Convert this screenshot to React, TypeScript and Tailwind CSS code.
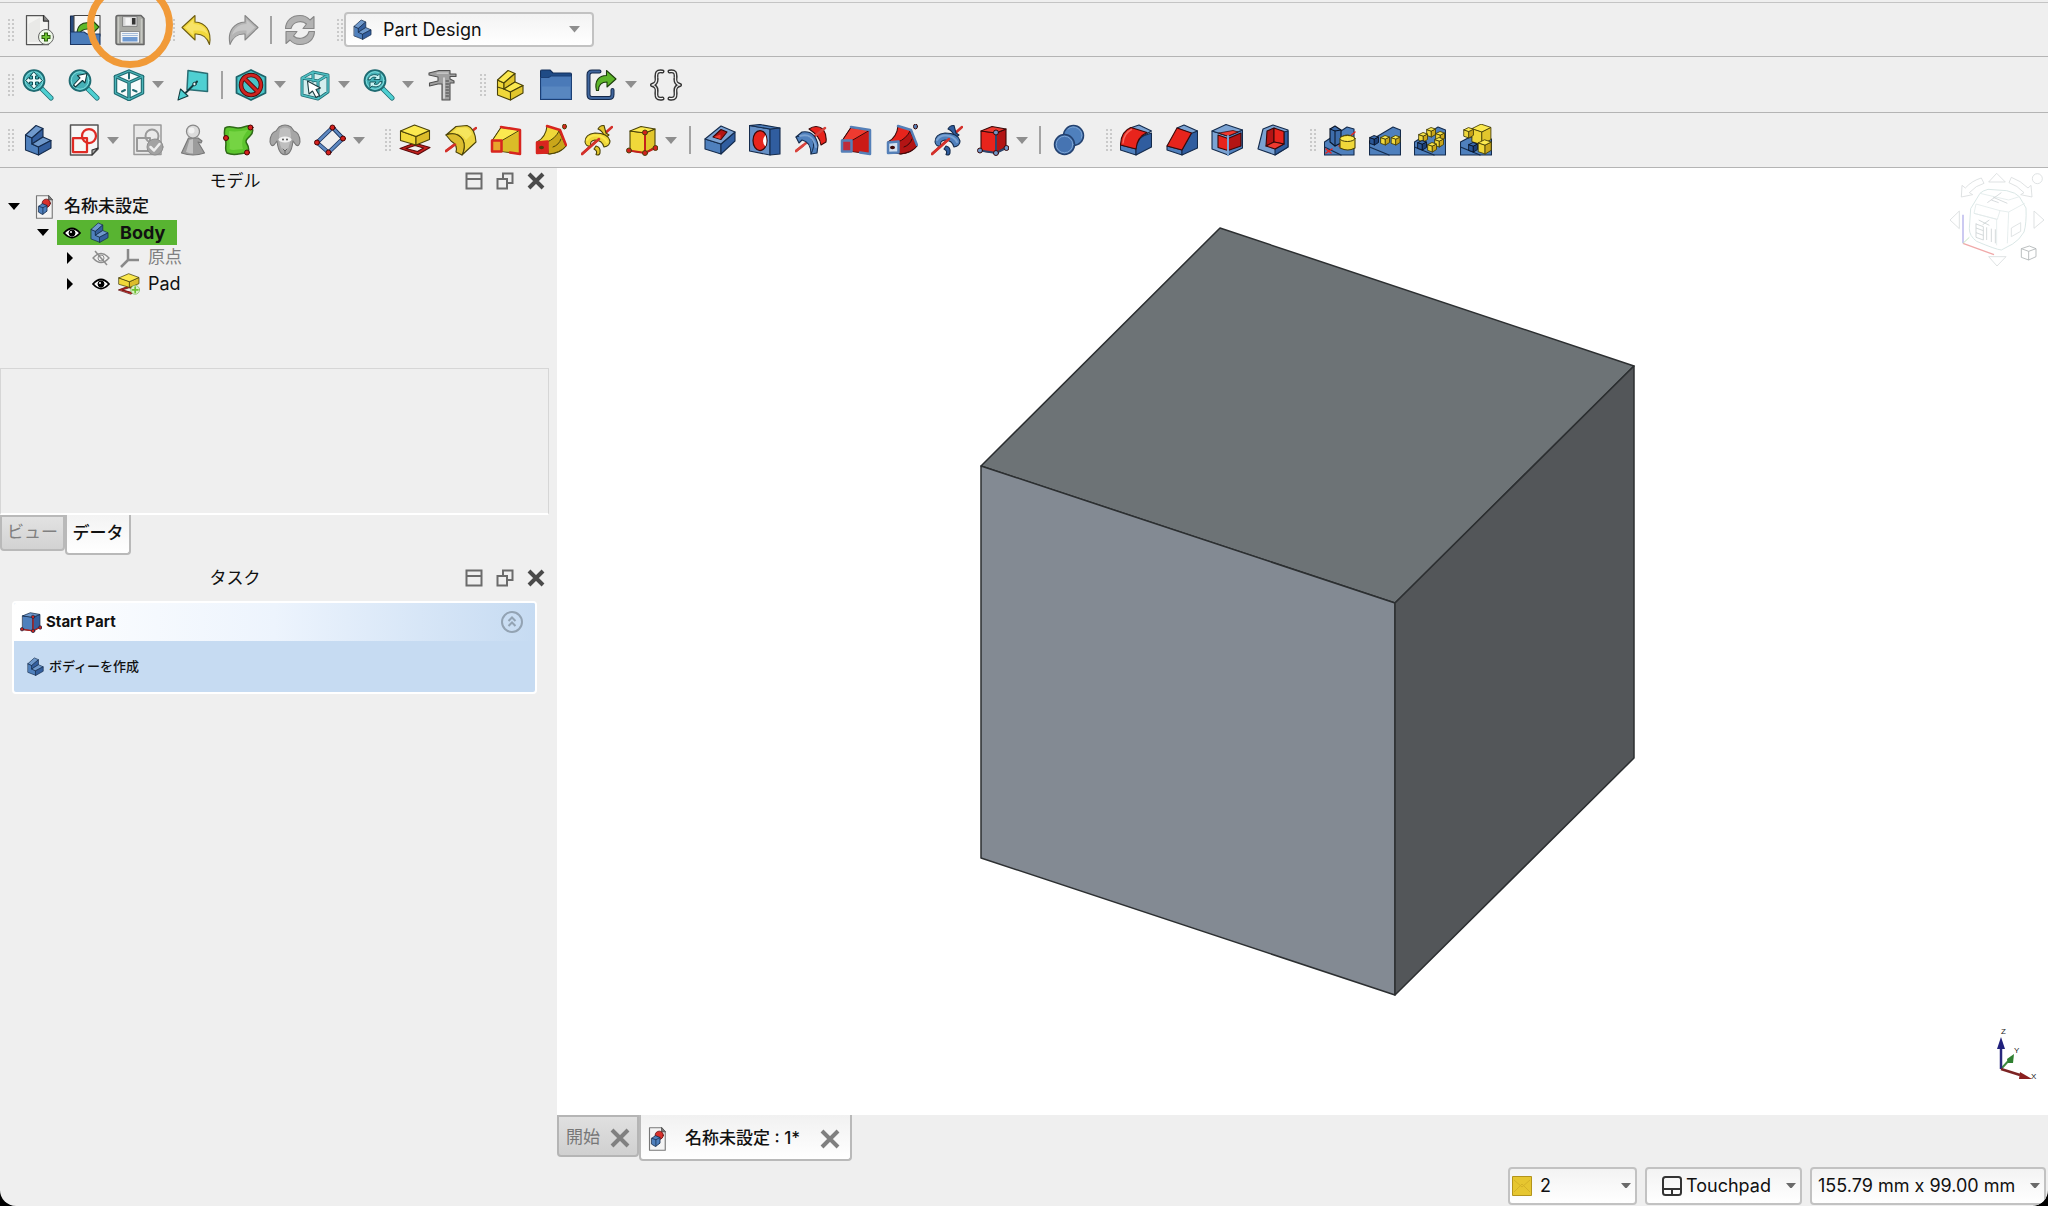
import React from "react";

type Pal = { l: string; m: string; d: string; s: string };
const Y: Pal = { l: "#fbe94f", m: "#f0d83a", d: "#c9a61a", s: "#4a4208" };
const R: Pal = { l: "#ef3a30", m: "#e8241c", d: "#b31414", s: "#3a0808" };
const B: Pal = { l: "#7ba3d3", m: "#4f80bd", d: "#305d9f", s: "#142b4c" };

function Svg({ children, className = "size-8" }: { children: React.ReactNode; className?: string }) {
  return (
    <svg viewBox="0 0 64 64" className={`${className} shrink-0`} aria-hidden="true" strokeLinejoin="round" strokeLinecap="round" fill="none">
      {children}
    </svg>
  );
}

/* A filled face with an outline */
function F({ d, f, s = "#111", w = 2.2 }: { d: string; f: string; s?: string; w?: number }) {
  return <path d={d} fill={f} stroke={s} strokeWidth={w} />;
}

/* A stroked line with a darker casing */
function L({ d, c, s, w = 5 }: { d: string; c: string; s: string; w?: number }) {
  return (
    <>
      <path d={d} stroke={s} strokeWidth={w + 3} />
      <path d={d} stroke={c} strokeWidth={w} />
    </>
  );
}

/* ---------- file icons ---------- */
const NewDoc = () => (
  <Svg>
    <F d="M7 3H41L51 14V61H7Z" f="#f4f4f2" s="#555" w={2.5} />
    <path d="M41 3V14H51" fill="#888" stroke="#333" strokeWidth={2.5} />
    <path d="M11 56V20L34 7V56Z" fill="#dededb" opacity="0.5" />
    <circle cx="46" cy="46" r="15" fill="#eef7e8" stroke="#666" strokeWidth="2" />
    <path d="M46 37V55M37 46H55" stroke="#2c5c10" strokeWidth="8" strokeLinecap="butt" />
    <path d="M46 39V53M39 46H53" stroke="#6cc02f" strokeWidth="4" strokeLinecap="butt" />
  </Svg>
);
const OpenDoc = () => (
  <Svg>
    <F d="M3 4H20V40H3Z" f="#2a4d80" s="#14284a" />
    <F d="M10 3H62V44H10Z" f="#f6f6f6" s="#444" />
    <F d="M16 40C16 24 26 15 42 18V8L60 26L44 42V31C32 28 24 32 18 42Z" f="#5fb829" s="#1d3d0c" />
    <F d="M3 36H30L36 40H62V61H3Z" f="#4a7cba" s="#1b3765" />
  </Svg>
);
const Save = () => (
  <Svg>
    <F d="M8 3H54L60 9V61H8Q4 61 4 57V7Q4 3 8 3Z" f="#a9aaa5" s="#666" w={3} />
    <path d="M9 7V57M55 11V57" stroke="#c8c9c4" strokeWidth="3" />
    <path d="M18 5H46V25H18Z" fill="#d9d9d9" stroke="#777" strokeWidth="1.5" />
    <path d="M36 8H43V21H36Z" fill="#333" />
    <path d="M23 8H33V22H23Z" fill="#f4f4f4" />
    <F d="M13 35H51V58H13Z" f="#f2f4f6" s="#777" w={1.5} />
    <path d="M17 39H47M17 43H47" stroke="#8aa8cf" strokeWidth="1.5" />
    <path d="M17 46H47V55H17Z" fill="#6f9ad2" />
  </Svg>
);
const Undo = () => (
  <Svg>
    <F d="M2 27L28 3V16C48 17 62 32 57 61C52 46 44 39 28 40V52Z" f="#f2d83c" s="#6d5c10" />
    <path d="M8 27L25 11V20C40 20 50 27 54 41C47 34 40 32 25 33V43Z" fill="#fbeb83" opacity="0.6" />
  </Svg>
);
const Redo = () => (
  <Svg>
    <F d="M62 27L36 3V16C16 17 0 32 6 61C12 46 20 39 36 40V52Z" f="#b4b4b4" s="#858585" />
    <path d="M56 27L39 11V20C24 20 14 28 10 42C18 34 26 32 39 33V43Z" fill="#cfcfcf" opacity="0.7" />
  </Svg>
);
const Refresh = () => (
  <Svg>
    <F d="M3 29C4 12 16 3 32 3C40 3 47 6 52 12L60 5V29H38L45 20C36 12 18 14 14 29Z" f="#b2b2b2" s="#868686" />
    <F d="M61 35C60 52 48 61 32 61C24 61 17 58 12 52L4 59V35H26L19 44C28 52 46 50 50 35Z" f="#b2b2b2" s="#868686" />
  </Svg>
);

/* ---------- view icons ---------- */
const TEAL = "#1f6b72";
const CYAN = "#4fd0d2";
function Lens({ children }: { children: React.ReactNode }) {
  return (
    <Svg>
      <L d="M40 40L58 58" c={CYAN} s={TEAL} w={7} />
      <circle cx="24" cy="23" r="21" fill="#45b0b6" stroke={TEAL} strokeWidth="3.5" />
      <circle cx="24" cy="23" r="17.5" stroke="#7fdede" strokeWidth="2" />
      {children}
    </Svg>
  );
}
const FitAll = () => (
  <Lens>
    <path d="M24 6L31 14H27V20H33V16L41 23L33 30V26H27V32H31L24 40L17 32H21V26H15V30L7 23L15 16V20H21V14H17Z" fill="#eafafa" stroke="#0f4e54" strokeWidth="2" />
  </Lens>
);
const FitSel = () => (
  <Lens>
    <path d="M38 9L34 28L29 23L15 36L11 32L24 18L19 13Z" fill="#fff" stroke="#103a3e" strokeWidth="2.2" />
  </Lens>
);
const SyncView = () => (
  <Lens>
    <path d="M10 21C12 12 22 9 30 13L34 9V21H22L26 17C20 15 17 17 15 21Z" fill="#c9f4f4" stroke="#0f4e54" strokeWidth="1.8" />
    <path d="M38 26C36 35 26 38 18 34L14 38V26H26L22 30C28 32 31 30 33 26Z" fill="#c9f4f4" stroke="#0f4e54" strokeWidth="1.8" />
  </Lens>
);
const IsoView = () => (
  <Svg>
    <F d="M32 4L59 15V48L32 61L5 48V15Z" f="#f8fbfb" s={TEAL} w={7} />
    <path d="M5 15L32 27L59 15M32 27V61" stroke={TEAL} strokeWidth="7" />
    <path d="M32 4L59 15V48L32 61L5 48V15ZM5 15L32 27L59 15M32 27V61" stroke="#4ab5b8" strokeWidth="2.5" />
    <path d="M32 9V19M18 45L24 42M40 42L47 45" stroke={TEAL} strokeWidth="4" />
  </Svg>
);
const AlignView = () => (
  <Svg>
    <F d="M22 3L61 9V45L20 41Z" f={CYAN} s="#2a6d73" w={3} />
    <path d="M40 25L18 47" stroke="#123c40" strokeWidth="4" />
    <circle cx="35" cy="30" r="3.5" fill="#e8f8f8" stroke="#123c40" strokeWidth="2" />
    <F d="M2 62L7 40L22 54Z" f={CYAN} s="#123c40" />
  </Svg>
);
const DrawStyle = () => (
  <Svg>
    <F d="M32 2L61 16V48L32 62L3 48V16Z" f="#49c4c8" s="#1d646a" w={3.5} />
    <circle cx="32" cy="32" r="20" stroke="#4c0a0a" strokeWidth="9" />
    <path d="M18 18L46 46" stroke="#4c0a0a" strokeWidth="9" />
    <circle cx="32" cy="32" r="20" stroke="#cf2320" strokeWidth="5.5" />
    <path d="M18 18L46 46" stroke="#cf2320" strokeWidth="5.5" />
  </Svg>
);
const BoxSel = () => (
  <Svg>
    <path d="M6 18L28 6L58 12V46L38 60L6 52Z" fill="#c9eeee" opacity="0.7" />
    <L d="M6 18L28 6L58 12V46L38 60L6 52ZM6 18L38 24L58 12M38 24V60M28 6V24" c="#4fbfc2" s={TEAL} w={3} />
    <F d="M17 24L20 50L27 44L34 57L41 53L34 41L43 38Z" f="#fff" s="#1b3c40" />
  </Svg>
);
const Caliper = () => (
  <Svg>
    <F d="M4 8L24 3H46V10H58V15H46V20L54 24V28H46V62H30V30H22L5 34V28L22 24V16L4 12Z" f="#a0a0a0" s="#505050" />
    <path d="M34 18V58" stroke="#e2e2e2" strokeWidth="3" />
    <path d="M38 24H43M38 30H43M38 36H43M38 42H43M38 48H43M38 54H43" stroke="#444" strokeWidth="2" />
    <path d="M20 8H42" stroke="#d0d0d0" strokeWidth="2.5" />
  </Svg>
);

/* ---------- structure icons ---------- */
function Step({ p, className, split = false }: { p: Pal; className?: string; split?: boolean }) {
  return (
    <Svg className={className}>
      <F d="M7 22L20 28V40L33 46V62L7 52Z" f={p.m} s={p.s} />
      <F d="M7 22L28 3L42 9L20 28Z" f={p.l} s={p.s} />
      <F d="M20 28L42 9V26L20 40Z" f={p.d} s={p.s} />
      <F d="M20 40L42 26L58 33L33 46Z" f={p.l} s={p.s} />
      <F d="M33 46L58 33V48L33 62Z" f={p.d} s={p.s} />
      {split && <path d="M7 36L20 40" stroke={p.s} strokeWidth="2.5" />}
    </Svg>
  );
}
const Y2: Pal = { ...Y, d: "#e2c62c" };
const B2: Pal = { ...B, l: "#6f99cc", d: "#345f9e" };
const Folder = () => (
  <Svg>
    <F d="M1 5Q1 2 4 2H20L26 8H60Q63 8 63 11V30H1Z" f="#1f4b86" s="#14305c" />
    <F d="M1 17H17L22 14H63V61H1Z" f="#4a7ab8" s="#1b3f75" />
    <path d="M4 35H60V58H4Z" fill="#6e9acd" opacity="0.4" />
  </Svg>
);
const LinkGo = () => (
  <Svg>
    <path d="M27 5H12Q5 5 5 12V51Q5 58 12 58H46Q53 58 53 51V42" stroke="#14284a" strokeWidth="8" />
    <path d="M27 5H12Q5 5 5 12V51Q5 58 12 58H46Q53 58 53 51V42" stroke="#3f659c" strokeWidth="4" />
    <F d="M21 43C16 24 26 13 41 13V3L60 20L42 36V26C32 26 25 31 25 43Z" f="#5db52a" s="#1d3d0c" />
  </Svg>
);
const Braces = () => (
  <Svg>
    {["#333", "#f2f2f2"].map((c, i) => (
      <path key={c} d="M25 5C14 3 12 8 13 18C14 26 12 30 4 32C12 34 14 38 13 46C12 56 14 61 25 59M39 5C50 3 52 8 51 18C50 26 52 30 60 32C52 34 50 38 51 46C52 56 50 61 39 59" stroke={c} strokeWidth={i ? 2.5 : 8} />
    ))}
  </Svg>
);

/* ---------- sketch icons ---------- */
const Sketch = () => (
  <Svg>
    <F d="M5 2H60V50L48 62H5Z" f="#f7f7f7" s="#555" w={3} />
    <F d="M48 62V52L60 48Z" f="#aaa" s="#333" />
    <circle cx="42" cy="24" r="14" stroke="#df2b25" strokeWidth="4.5" />
    <path d="M10 28H38V56H10Z" stroke="#df2b25" strokeWidth="4.5" />
  </Svg>
);
const SketchCheck = () => (
  <Svg>
    <F d="M4 2H58V61H4Z" f="#e9e9e9" s="#9a9a9a" w={3} />
    <circle cx="40" cy="24" r="13" stroke="#999" strokeWidth="4" />
    <path d="M10 28H36V54H10Z" stroke="#999" strokeWidth="4" />
    <circle cx="46" cy="46" r="16" fill="#a3a3a3" stroke="#8e8e8e" strokeWidth="2" />
    <path d="M37 46L44 53L55 40" stroke="#eee" strokeWidth="5" />
  </Svg>
);
const Pawn = () => (
  <Svg>
    <F d="M23 28H42L50 34L48 38L42 36L55 58Q32 66 9 58Z" f="#9c9c9c" s="#777" />
    <path d="M25 32L18 56Q26 59 32 59V30Z" fill="#c4c4c4" />
    <circle cx="32" cy="15" r="13" fill="#dcdcdc" stroke="#888" strokeWidth="2.5" />
    <circle cx="29" cy="13" r="6" fill="#f2f2f2" />
  </Svg>
);
const Surface = () => (
  <Svg>
    <F d="M4 8C14 2 20 8 30 8C42 8 46 2 56 4C62 12 60 18 54 24C46 32 44 34 48 40C52 46 52 52 50 58C36 56 26 66 8 58C2 50 8 44 5 32C2 22 2 16 4 8Z" f="#5cc52d" s="#2f6a18" w={3} />
    <path d="M12 14C24 16 38 14 50 12C40 24 36 34 40 50C30 50 20 54 13 50C15 38 10 26 12 14Z" fill="#86dd52" opacity="0.6" />
    {[[55, 7], [6, 28], [48, 57]].map(([x, y]) => (
      <circle key={x} cx={x} cy={y} r="5" fill="#d4211e" stroke="#4a0505" strokeWidth="2" />
    ))}
  </Svg>
);
const Sheep = () => (
  <Svg>
    <F d="M20 6Q32 -2 44 6L50 14Q62 18 62 36Q60 46 54 42L48 34Q46 52 40 58Q32 65 24 58Q18 52 16 34L10 42Q4 46 2 36Q2 18 14 14Z" f="#a6a6a6" s="#777" />
    <path d="M22 10Q32 4 42 10L44 24Q42 40 38 50Q32 56 26 50Q20 40 20 24Z" fill="#bfbfbf" />
    <ellipse cx="32" cy="31" rx="13" ry="6" fill="#f2f2f2" />
    <circle cx="28" cy="31" r="2" fill="#555" />
    <circle cx="36" cy="31" r="2" fill="#555" />
    <path d="M28 50L32 54L36 50M32 54V59" stroke="#666" strokeWidth="2" />
  </Svg>
);
const Datum = () => (
  <Svg>
    <L d="M37 7L58 29L29 57L6 37Z" c="#5d88c0" s="#17305a" w={5} />
    {[[37, 7], [58, 29], [29, 57], [6, 37]].map(([x, y]) => (
      <circle key={x} cx={x} cy={y} r="5" fill="#d4211e" stroke="#4a0505" strokeWidth="2" />
    ))}
  </Svg>
);

/* ---------- additive / subtractive features ---------- */
const Pad = ({ className, plus }: { className?: string; plus?: boolean }) => (
  <Svg className={className}>
    <path d="M2 49L31 38L62 47L38 61ZM14 49L32 43L49 48L37 55Z" fill="#c5201c" fillRule="evenodd" stroke="#5a0a0a" strokeWidth="2.2" />
    <F d="M3 14L34 25V42L3 33Z" f={Y.m} s={Y.s} />
    <F d="M34 25L61 13V31L34 42Z" f="#dcbc2a" s={Y.s} />
    <F d="M3 14L31 2L61 13L34 25Z" f={Y.l} s={Y.s} />
    {plus && (
      <>
        <circle cx="50" cy="49" r="13" fill="#d9efc8" stroke="#7fb860" strokeWidth="2" />
        <path d="M50 41V57M42 49H58" stroke="#6cc02f" strokeWidth="5" />
      </>
    )}
  </Svg>
);
const Revolve = () => (
  <Svg>
    <path d="M2 54L62 8" stroke="#d3312b" strokeWidth="5" />
    <F d="M2 22L22 5L44 3Q60 8 62 36L34 62Q42 46 36 32Q24 14 2 22Z" f="#ecd440" s={Y.s} />
    <F d="M2 22Q24 14 36 32Q42 46 34 62L22 56Q26 42 12 34Z" f="#dcbd2e" s={Y.s} />
    <path d="M14 17L26 8L42 7Q50 10 54 20L42 32Q32 16 14 17Z" fill="#fbec6a" opacity="0.7" />
    <path d="M2 54L20 41" stroke="#d3312b" strokeWidth="5" />
  </Svg>
);
const Groove = () => (
  <Svg>
    <F d="M28 10Q42 0 56 10Q64 22 62 36L52 42Q50 24 28 10Z" f={R.m} s={R.s} />
    <path d="M2 54L60 8" stroke="#d8433d" strokeWidth="5" />
    <F d="M2 26L14 16Q40 12 46 42L44 58L32 60Q32 36 14 32L8 38Z" f={B.m} s={B.s} />
    <path d="M2 26Q30 16 36 34Q40 44 32 60" stroke={B.s} strokeWidth="2" />
    <path d="M10 24Q34 16 42 46" stroke={B.l} strokeWidth="4" />
    <path d="M2 54L16 43" stroke="#d8433d" strokeWidth="5" />
  </Svg>
);
function Loft({ p, a, inner }: { p: Pal; a: string; inner: string }) {
  return (
    <Svg>
      <F d="M4 34L22 7L60 12V60L24 55L4 54Z" f={p.m} s={p.s} />
      <path d="M24 34L60 14V60L24 55Z" fill={p.d} opacity="0.55" />
      <path d="M4 34L22 7L60 12L24 33Z" fill={p.l} stroke={p.s} strokeWidth="2" />
      <path d="M22 6L60 12V60L40 57" stroke={a} strokeWidth="5" />
      <path d="M4 33H23V55H4Z" fill={inner} stroke={a} strokeWidth="5" />
    </Svg>
  );
}
function Sweep({ p, a, inner }: { p: Pal; a: string; inner: string }) {
  return (
    <Svg>
      <F d="M4 36Q22 26 24 4L50 12L62 44Q52 58 30 60L6 56Z" f={p.m} s={p.s} />
      <path d="M24 36Q40 30 48 14L62 44Q50 58 28 60Z" fill={p.d} stroke={p.s} strokeWidth="2" />
      <path d="M36 46Q48 42 52 30" stroke={p.s} strokeWidth="2" />
      <path d="M24 4L50 12L62 42" stroke={a} strokeWidth="5" />
      <path d="M4 37L25 35V57L4 58Z" fill={inner} stroke={a} strokeWidth="5" />
      <ellipse cx="59" cy="5" rx="4" ry="5" fill={a} stroke={p.s} strokeWidth="2" />
      <ellipse cx="13" cy="47" rx="5" ry="3.5" fill={p.s} />
    </Svg>
  );
}
function Helix({ p }: { p: Pal }) {
  return (
    <Svg>
      <path d="M2 60L62 6" stroke="#d3312b" strokeWidth="5" />
      <F d="M34 10Q38 2 46 3L50 18L56 22L48 28Q44 14 34 10Z" f={p.d} s={p.s} />
      <F d="M8 36Q8 20 28 18Q54 18 58 34Q58 44 46 46Q42 32 28 32Q16 34 20 44Q10 46 8 36Z" f={p.m} s={p.s} />
      <path d="M12 32Q18 22 30 23Q46 24 52 36" stroke={p.l} strokeWidth="4" />
      <F d="M30 44Q40 46 38 58Q36 64 30 61Q34 54 26 50Z" f={p.d} s={p.s} />
      <path d="M2 60L36 30" stroke="#d3312b" strokeWidth="5" />
    </Svg>
  );
}
function Prim({ p, a, dot, className }: { p: Pal; a: string; dot: string; className?: string }) {
  return (
    <Svg className={className}>
      <F d="M8 14L38 18V58L8 54Z" f={p.m} s={p.s} />
      <F d="M38 18L58 10V46L38 58Z" f={p.d} s={p.s} />
      <F d="M8 14L30 5L58 10L38 18Z" f={p.l} s={p.s} />
      <path d="M38 18V58L58 48M38 58L6 53" stroke={a} strokeWidth="4" />
      {[[38, 17], [6, 53], [38, 58], [59, 48]].map(([x, y], i) => (
        <circle key={i} cx={x} cy={y} r="5" fill={dot} stroke={p.s} strokeWidth="2" />
      ))}
    </Svg>
  );
}
const Pocket = () => (
  <Svg>
    <F d="M2 30L34 40V60L2 50Z" f={B.m} s={B.s} />
    <F d="M34 40L62 16V34L34 60Z" f={B.d} s={B.s} />
    <F d="M2 30L34 4L62 16L34 40Z" f={B.l} s={B.s} />
    <F d="M18 26L34 11L46 16L34 31Z" f={R.d} s={R.s} />
    <path d="M20 26L33 21V30Z" fill={R.l} />
  </Svg>
);
const Hole = () => (
  <Svg>
    <F d="M1 3L42 10V62L1 54Z" f="#6690c6" s={B.s} />
    <F d="M42 10L62 8V60L42 62Z" f={B.d} s={B.s} />
    <F d="M1 3L22 1L62 8L42 10Z" f={B.m} s={B.s} />
    <ellipse cx="22" cy="33" rx="14" ry="20" fill={R.m} stroke={R.s} strokeWidth="2.500" />
    <path d="M33 22Q23 34 33 45Q37 34 33 22Z" fill="#fff" />
  </Svg>
);
const Bool = () => (
  <Svg>
    <circle cx="41" cy="23" r="20" fill={B.m} stroke="#23416f" strokeWidth="3" />
    <circle cx="23" cy="41" r="20" fill="#4674b2" stroke="#23416f" strokeWidth="3" />
    <circle cx="23" cy="41" r="16.5" stroke={B.l} strokeWidth="2" />
    <path d="M30 10A17 17 0 0 1 57 28" stroke={B.l} strokeWidth="2" />
  </Svg>
);

/* ---------- dress-up icons ---------- */
const Fillet = () => (
  <Svg>
    <F d="M1 42L32 50V62L1 52Z" f={B.m} s={B.s} />
    <F d="M32 50Q34 32 46 24L63 18V46L32 62Z" f={B.d} s={B.s} />
    <F d="M20 8L38 2L63 14L46 24Z" f={B.l} s={B.s} />
    <F d="M1 42Q2 14 22 7L54 17Q34 26 32 50Z" f={R.m} s={R.s} />
    <path d="M6 38Q8 18 23 11" stroke="#f7665c" strokeWidth="3" />
  </Svg>
);
const Chamfer = () => (
  <Svg>
    <F d="M2 44L32 52V62L2 52Z" f={B.m} s={B.s} />
    <F d="M32 52L52 17L63 14V48L32 62Z" f={B.d} s={B.s} />
    <F d="M22 8L36 2L63 14L50 19Z" f={B.l} s={B.s} />
    <F d="M2 44L22 8L51 18L32 52Z" f={R.m} s={R.s} />
  </Svg>
);
const Draft = () => (
  <Svg>
    <F d="M2 14L34 24V62L2 50Z" f={B.l} s={B.s} />
    <F d="M34 24L63 12V48L34 62Z" f={B.m} s={B.s} />
    <F d="M2 14L30 1L63 12L34 24Z" f={B.l} s={B.s} />
    <F d="M14 22L34 29V53L14 47Z" f={R.m} s={R.s} />
    <F d="M34 29L60 18V44L34 53Z" f={R.d} s={R.s} />
    <F d="M16 18L44 13L54 16L34 24Z" f={R.l} s={R.s} w={1.5} />
    <path d="M34 24V62" stroke={B.l} strokeWidth="4" />
  </Svg>
);
const Thick = () => (
  <Svg>
    <F d="M12 10L32 2L62 12V46L36 62L2 50Z" f={B.l} s={B.s} />
    <F d="M62 14V46L36 62V50L54 40V16Z" f={B.d} s={B.s} />
    <F d="M20 14L34 8V36L18 44Z" f={R.d} s={R.s} />
    <F d="M34 8L54 15V40L34 36Z" f={R.m} s={R.s} />
    <F d="M18 44L34 36L54 40L36 50Z" f={R.l} s={R.s} />
  </Svg>
);

/* ---------- pattern icons ---------- */
function Cubelet({ x, y, p, k = 1 }: { x: number; y: number; p: Pal; k?: number }) {
  const w = 1.8 / k;
  return (
    <g transform={`translate(${x} ${y}) scale(${k})`}>
      <F d="M-8 -5L1 -2V10L-8 7Z" f={p.m} s={p.s} w={w} />
      <F d="M1 -2L9 -6V5L1 10Z" f={p.d} s={p.s} w={w} />
      <F d="M-8 -5L0 -9L9 -6L1 -2Z" f={p.l} s={p.s} w={w} />
    </g>
  );
}
const BD: Pal = { l: "#3d6cab", m: "#2a5797", d: "#1b3f78", s: "#081326" };
const Mirror = () => (
  <Svg>
    <F d="M1 36L46 6L60 10V62H1Z" f={B.m} s={B.s} />
    <path d="M1 46L34 62" stroke={B.s} strokeWidth="2.5" />
    <path d="M30 44L62 16M4 50L14 58M4 58L16 50" stroke={R.m} strokeWidth="3" />
    <F d="M12 10L22 4L34 12V38L22 44L12 36Z" f={BD.l} s={BD.s} />
    <path d="M22 14V44M12 10L22 14L34 12" stroke={BD.s} strokeWidth="2" />
    <F d="M32 30Q46 14 62 30V48Q48 56 32 48Z" f={Y.m} s={Y.s} />
    <ellipse cx="47" cy="29" rx="15" ry="6" fill={Y.l} stroke={Y.s} strokeWidth="2" />
  </Svg>
);
const Linear = () => (
  <Svg>
    <F d="M1 34L48 6L63 12V62H1Z" f={B.m} s={B.s} />
    <path d="M1 46L40 62" stroke={B.s} strokeWidth="2.5" />
    <Cubelet x={10} y={32} p={BD} />
    <Cubelet x={32} y={32} p={Y} />
    <Cubelet x={53} y={32} p={Y} />
  </Svg>
);
const Polar = () => (
  <Svg>
    <F d="M1 36L48 6L63 12V62H1Z" f={B.m} s={B.s} />
    <path d="M1 46L40 62" stroke={B.s} strokeWidth="2.5" />
    <Cubelet x={34} y={16} p={Y} />
    <Cubelet x={18} y={26} p={Y} />
    <Cubelet x={52} y={24} p={Y} />
    <Cubelet x={50} y={36} p={Y} />
    <Cubelet x={16} y={42} p={BD} />
    <Cubelet x={36} y={46} p={Y} />
  </Svg>
);
const Multi = () => (
  <Svg>
    <F d="M1 36L20 26L63 30V62H1Z" f={B.m} s={B.s} />
    <path d="M1 46L40 62" stroke={B.s} strokeWidth="2.5" />
    <Cubelet x={42} y={20} p={Y2} k={2.2} />
    <Cubelet x={17} y={17} p={Y} k={1.1} />
    <Cubelet x={26} y={46} p={BD} />
    <Cubelet x={49} y={45} p={Y} k={1.5} />
  </Svg>
);
const DocIcon = ({ className }: { className?: string }) => (
  <Svg className={className}>
    <F d="M12 2H44L54 13V62H12Z" f="#f4f4f4" s="#777" w={3} />
    <F d="M44 2V13H54Z" f="#777" s="#555" />
    <circle cx="38" cy="22" r="11" fill="#d8302b" stroke="#5a0b0b" strokeWidth="2" />
    <F d="M18 30L28 23L40 28V43L28 52L18 46Z" f={B.m} s={B.s} />
    <path d="M18 30L29 34L40 28M29 34V51" stroke={B.s} strokeWidth="2" />
  </Svg>
);

/* ---------- toolbar parts ---------- */
function Tri({ className = "w-3 text-[#8e8e8e]" }: { className?: string }) {
  return (
    <svg viewBox="0 0 12 7" className={`${className} shrink-0`} aria-hidden="true">
      <path d="M0 0H12L6 7Z" fill="currentColor" />
    </svg>
  );
}
function Grip({ className }: { className: string }) {
  return (
    <div className={`${className} flex shrink-0`} aria-hidden="true">
      <div className="grid grid-cols-2 gap-0.5">
        {Array.from({ length: 12 }, (_, i) => (
          <span key={i} className="size-0.5 rounded-full bg-[#bdbdbd]" />
        ))}
      </div>
    </div>
  );
}
function Sep({ className = "w-[11px]" }: { className?: string }) {
  return (
    <div className={`${className} flex shrink-0 justify-center`} role="separator">
      <span className="h-7 w-0.5 bg-[#a3a3a3]" />
    </div>
  );
}
function Tool({ label, icon, menu, tight, ring }: { label: string; icon: React.ReactNode; menu?: boolean; tight?: boolean; ring?: boolean }) {
  return (
    <div className="flex shrink-0 items-center">
      <button type="button" aria-label={label} title={label} className={`${tight ? "w-[45px]" : "w-[46px]"} relative flex h-12 items-center justify-center`}>
        {icon}
        {ring && <span className="pointer-events-none absolute -top-6 -left-5 z-10 size-[86px] rounded-full border-[7px] border-[#f19a38]" />}
      </button>
      {menu && (
        <button type="button" aria-label={`${label} menu`} className="flex h-12 w-[18px] items-center">
          <Tri />
        </button>
      )}
    </div>
  );
}

function PanelTitle({ title }: { title: string }) {
  return (
    <div className="flex h-[26px] items-center pr-1.5 pl-3">
      <h2 className="flex-1 text-center text-[17px] leading-6">{title}</h2>
      <button type="button" aria-label={`${title}: toggle`} className="flex w-[31px] justify-center">
        <svg viewBox="0 0 18 18" className="size-[18px]" fill="none" stroke="#6b6b6b" strokeWidth="2"><path d="M1.500 1.500H16.500V16.500H1.500ZM1.500 7H16.500" /></svg>
      </button>
      <button type="button" aria-label={`${title}: float`} className="flex w-[31px] justify-center">
        <svg viewBox="0 0 18 18" className="size-[18px]" fill="none" stroke="#6b6b6b" strokeWidth="2"><path d="M7 7V1.500H16.500V11H11M1.500 7H11V16.500H1.500Z" /></svg>
      </button>
      <button type="button" aria-label={`${title}: close`} className="flex w-[31px] justify-center">
        <svg viewBox="0 0 18 18" className="size-[18px]" fill="none" stroke="#4a4a4a" strokeWidth="4"><path d="M2 2L16 16M16 2L2 16" /></svg>
      </button>
    </div>
  );
}

function Eye({ off }: { off?: boolean }) {
  const c = off ? "#8c8c8c" : "#000";
  return (
    <svg viewBox="0 0 18 18" className="size-[18px] shrink-0" fill="none" aria-hidden="true">
      <path d="M1 9Q9 0 17 9Q9 18 1 9Z" fill={off ? "none" : "#fff"} stroke={c} strokeWidth={off ? 1.3 : 1.8} />
      <circle cx="9" cy="9" r="3" fill={off ? "none" : c} stroke={c} />
      {!off && <circle cx="8" cy="8" r="1" fill="#fff" />}
      {off && <path d="M3 2L15 16" stroke={c} strokeWidth="1.500" />}
    </svg>
  );
}
function Twist({ open }: { open?: boolean }) {
  return (
    <button type="button" aria-label={open ? "Collapse" : "Expand"} aria-expanded={!!open} className="flex w-3 shrink-0 justify-center">
      <svg viewBox="0 0 12 12" className="size-3">
        <path d={open ? "M0 2H12L6 9Z" : "M3 0V12L9 6Z"} fill="#000" />
      </svg>
    </button>
  );
}
const AxisIcon = () => (
  <svg viewBox="0 0 20 20" className="size-5 shrink-0" fill="none" stroke="#8a8a8a" strokeWidth="2.500" aria-hidden="true">
    <path d="M8 1V12H19M8 12L1 19" />
  </svg>
);
const X = () => (
  <svg viewBox="0 0 20 20" className="size-5 shrink-0" fill="none" stroke="#808080" strokeWidth="4" aria-hidden="true">
    <path d="M2 2L18 18M18 2L2 18" />
  </svg>
);

/* Faint orientation cube in the corner of the viewport */
const NavCube = () => (
  <svg viewBox="0 24 354 336" className="absolute top-0 right-0 w-[118px]" fill="none" stroke="#d8dcdd" strokeWidth="2.500" strokeLinejoin="round" aria-label="Navigation cube" role="img">
    <path d="M176 66L200 40L226 66Z" />
    <path d="M176 290H228L201 318Z" />
    <path d="M60 180L88 153V206Z" />
    <path d="M312 153V205L342 180Z" />
    <circle cx="322" cy="56" r="15" />
    <path d="M94 111L96 76L106 84Q126 62 154 54L162 70Q138 76 118 98L128 104Z" />
    <path d="M306 111L303 76L294 84Q272 62 244 52L237 68Q262 76 282 98L272 104Z" />
    <path d="M122 146L150 100Q158 92 174 88L230 92Q258 98 268 110L288 144Q290 190 282 216Q268 240 248 252L214 270Q196 268 140 244Q118 228 118 206Z" stroke="#d2e2e1" />
    <path d="M138 132L210 152L202 178L132 160ZM132 160L200 178V256M210 152L236 156L284 130M236 156L232 250M150 100L236 120L268 110" stroke="#e2eaea" />
    <path d="M172 128L214 98M190 112L232 130M184 120L206 128" stroke="#d0d5d7" />
    <path d="M146 180L178 196M178 180L158 194M138 190V232L160 240V200L138 192M138 204L160 212M138 218L160 226M170 202V240M184 206V246M196 208V250" stroke="#ccd2d4" />
    <path d="M244 204L272 188V214L244 230Z" stroke="#dadfe0" />
    <path d="M274 266L298 258L318 266L296 274ZM274 266V292L296 300L318 290V266M296 274V300" stroke="#aeb3b5" />
    <path d="M99 164V250" stroke="#b3b0ea" strokeWidth="4" />
    <path d="M99 250L192 284" stroke="#f0a9a9" strokeWidth="4" />
    <path d="M99 250L118 232" stroke="#c5e6c5" strokeWidth="3" />
  </svg>
);

const AxisCross = () => (
  <svg viewBox="0 0 44 56" className="absolute right-3 bottom-8 w-11 overflow-visible" aria-label="Axis cross" role="img">
    <path d="M9 42L20 30" stroke="#3f8a3f" strokeWidth="2" />
    <path d="M15 32L22 27L21 36L16 36Z" fill="#2f8030" />
    <path d="M9 42V22" stroke="#29297c" strokeWidth="2.500" />
    <path d="M9 10L13 22H5Z" fill="#20207c" />
    <path d="M9 42L28 48" stroke="#7c2424" strokeWidth="2.500" />
    <path d="M28 45L40 52L27 52Z" fill="#8a1f1f" />
    <g fill="#222" fontFamily="Liberation Sans, sans-serif" fontSize="8">
      <text x="9" y="7">Z</text>
      <text x="22" y="26">Y</text>
      <text x="39" y="52">X</text>
    </g>
  </svg>
);

function Combo({ label, value, icon, className, selectClass = "", arrow }: { label: string; value: string; icon?: React.ReactNode; className: string; selectClass?: string; arrow?: string }) {
  return (
    <label className={`${className} flex shrink-0 items-center rounded border-2 border-[#c2c2c2] bg-linear-to-b from-[#f3f3f3] to-white text-lg`}>
      {icon}
      <select aria-label={label} className={`${selectClass} min-w-0 flex-1 appearance-none bg-transparent outline-none`}>
        <option>{value}</option>
      </select>
      <Tri className={arrow ?? "w-2.5 text-[#6a6a6a]"} />
    </label>
  );
}

export default function App() {
  return (
    <div className="min-h-screen bg-black">
      <div className="flex h-screen flex-col overflow-hidden rounded-b-2xl bg-[#efefef] font-['Inter','Noto_Sans_CJK_JP',sans-serif] text-[17px] text-[#111]">
        <header>
          <div className="h-[3px] border-b border-[#c4c4c4]" />
          <div className="flex h-[54px] items-center border-b border-[#b4b4b4]">
            <Grip className="w-4 pl-2" />
            <Tool label="New" icon={<NewDoc />} />
            <Tool label="Open" icon={<OpenDoc />} tight />
            <Tool label="Save" icon={<Save />} ring />
            <Grip className="w-[21px] pl-4" />
            <Tool label="Undo" icon={<Undo />} />
            <Tool label="Redo" icon={<Redo />} tight />
            <Sep className="w-3" />
            <Tool label="Refresh" icon={<Refresh />} />
            <Grip className="w-[21px] pl-[14px]" />
            <Combo label="Workbench" value="Part Design" arrow="w-[11px] text-[#8e8e8e]" icon={<Step p={B2} className="size-[21px]" />} className="h-[35px] w-[250px] gap-2.5 pr-3 pl-1.5" />
          </div>
          <div className="flex h-14 items-center border-b border-[#b4b4b4]">
            <Grip className="w-[15px] pl-2" />
            <Tool label="Fit all" icon={<FitAll />} />
            <Tool label="Fit selection" icon={<FitSel />} tight />
            <Tool label="Isometric" icon={<IsoView />} menu />
            <Tool label="Align to selection" icon={<AlignView />} />
            <Sep className="w-3" />
            <Tool label="Draw style" icon={<DrawStyle />} menu />
            <Tool label="Box selection" icon={<BoxSel />} menu />
            <Tool label="Sync view" icon={<SyncView />} menu />
            <Tool label="Measure" icon={<Caliper />} />
            <Grip className="w-[21px] pl-[14px]" />
            <Tool label="Create part" icon={<Step p={Y2} split />} />
            <Tool label="Create group" icon={<Folder />} />
            <Tool label="Link actions" icon={<LinkGo />} menu />
            <Tool label="Expression" icon={<Braces />} />
          </div>
          <div className="flex h-[55px] items-center border-b border-[#b4b4b4]">
            <Grip className="w-[15px] pl-2" />
            <Tool label="Body" icon={<Step p={B2} />} />
            <Tool label="Sketch" icon={<Sketch />} menu />
            <Tool label="Validate sketch" icon={<SketchCheck />} tight />
            <Tool label="Check geometry" icon={<Pawn />} />
            <Tool label="Shape binder" icon={<Surface />} />
            <Tool label="Clone" icon={<Sheep />} tight />
            <Tool label="Datum" icon={<Datum />} menu />
            <Grip className="w-[21px] pl-[14px]" />
            <Tool label="Pad" icon={<Pad />} />
            <Tool label="Revolution" icon={<Revolve />} tight />
            <Tool label="Additive loft" icon={<Loft p={Y} a="#d8251f" inner="#e8a52c" />} tight />
            <Tool label="Additive pipe" icon={<Sweep p={Y} a="#d8251f" inner="#d8251f" />} />
            <Tool label="Additive helix" icon={<Helix p={Y2} />} tight />
            <Tool label="Additive primitive" icon={<Prim p={Y2} a="#c4201b" dot="#d4211e" />} menu />
            <Sep className="w-[14px]" />
            <Tool label="Pocket" icon={<Pocket />} tight />
            <Tool label="Hole" icon={<Hole />} />
            <Tool label="Groove" icon={<Groove />} tight />
            <Tool label="Subtractive loft" icon={<Loft p={R} a="#5580b8" inner="#c02a3a" />} />
            <Tool label="Subtractive pipe" icon={<Sweep p={R} a="#5580b8" inner="#d4e0ef" />} tight />
            <Tool label="Subtractive helix" icon={<Helix p={B} />} />
            <Tool label="Subtractive primitive" icon={<Prim p={R} a="#2d456c" dot="#6e97c9" />} menu />
            <Sep className="w-3" />
            <Tool label="Boolean" icon={<Bool />} />
            <Grip className="w-[21px] pl-[14px]" />
            <Tool label="Fillet" icon={<Fillet />} />
            <Tool label="Chamfer" icon={<Chamfer />} tight />
            <Tool label="Draft" icon={<Draft />} />
            <Tool label="Thickness" icon={<Thick />} />
            <Grip className="w-[21px] pl-[14px]" />
            <Tool label="Mirrored" icon={<Mirror />} tight />
            <Tool label="Linear pattern" icon={<Linear />} tight />
            <Tool label="Polar pattern" icon={<Polar />} />
            <Tool label="Multi transform" icon={<Multi />} tight />
          </div>
        </header>

        <div className="flex min-h-0 flex-1">
          <aside className="flex w-[557px] shrink-0 flex-col">
            <section>
              <PanelTitle title="モデル" />
              <ul className="h-[174px]">
                <li>
                  <div className="flex h-[26px] items-center pl-2">
                    <Twist open />
                    <DocIcon className="ml-3 size-6" />
                    <span className="ml-2 font-medium">名称未設定</span>
                  </div>
                  <ul>
                    <li>
                      <div className="flex h-[25px] items-center pl-[37px]">
                        <Twist open />
                        <span className="ml-2 flex h-full items-center bg-[#58b431] pr-3 pl-1.5 text-lg font-bold">
                          <Eye />
                          <Step p={B2} className="ml-2 size-[21px]" />
                          <span className="ml-2.5">Body</span>
                        </span>
                      </div>
                      <ul>
                        <li className="flex h-[26px] items-center pl-16">
                          <Twist />
                          <span className="ml-4 flex items-center text-[#808080]">
                            <Eye off />
                            <span className="ml-2.5 flex"><AxisIcon /></span>
                            <span className="ml-2">原点</span>
                          </span>
                        </li>
                        <li className="flex h-[25px] items-center pl-16">
                          <Twist />
                          <span className="ml-4 flex items-center text-lg">
                            <Eye />
                            <Pad className="ml-2 size-[22px]" plus />
                            <span className="ml-2">Pad</span>
                          </span>
                        </li>
                      </ul>
                    </li>
                  </ul>
                </li>
              </ul>
              <div className="mr-2 h-[147px] border border-b-2 border-[#d6d6d6] border-b-white" />
              <div role="tablist" aria-label="プロパティ" className="flex items-start">
                <button role="tab" aria-selected="false" type="button" className="h-9 w-[65px] rounded-b border-2 border-[#b9b9b9] bg-linear-to-b from-[#e2e2e2] to-[#d2d2d2] text-[#808080]">ビュー</button>
                <button role="tab" aria-selected="true" type="button" className="h-10 w-[66px] rounded-b border-2 border-t-0 border-[#b9b9b9] bg-linear-to-b from-[#f3f3f3] to-white font-medium">データ</button>
              </div>
            </section>

            <section className="mt-2.5">
              <PanelTitle title="タスク" />
              <div className="mt-2.5 mr-5 ml-3 overflow-hidden rounded border-2 border-white bg-[#c6dbf2]">
                <div className="flex h-[38px] items-center bg-linear-to-r from-white via-[#edf4fd] to-[#c6dbf2] pr-3 pl-1.5">
                  <Prim p={B2} a="#b3201c" dot="#c8231e" className="size-[22px]" />
                  <h3 className="ml-1 flex-1 text-[15px] font-bold">Start Part</h3>
                  <button type="button" aria-label="Collapse" className="flex">
                    <svg viewBox="0 0 22 22" className="size-[22px]" fill="none" stroke="#93a3b3" strokeWidth="2">
                      <circle cx="11" cy="11" r="10" />
                      <path d="M7.500 10L11 6.500L14.500 10M7.500 15L11 11.500L14.500 15" />
                    </svg>
                  </button>
                </div>
                <div className="flex h-[51px] items-center pl-3">
                  <button type="button" className="flex items-center gap-1 text-[13px] font-medium">
                    <Step p={B2} className="size-[19px]" />
                    ボディーを作成
                  </button>
                </div>
              </div>
            </section>
          </aside>

          <main className="flex min-w-0 flex-1 flex-col">
            <div className="relative min-h-0 flex-1 bg-white">
              <svg viewBox="557 168 1491 947" className="absolute inset-0 h-full w-full" role="img" aria-label="3D view" strokeLinejoin="round" stroke="#2c2f31" strokeWidth="1.500">
                <path d="M1220 228L1634 366L1395 603L981 466Z" fill="#6d7376" />
                <path d="M981 466L1395 603V995L981 858Z" fill="#838a93" />
                <path d="M1395 603L1634 366V758L1395 995Z" fill="#535659" />
              </svg>
              <NavCube />
              <AxisCross />
            </div>
            <div className="flex h-[46px] items-start" role="tablist" aria-label="ドキュメント">
              <div className="flex h-[42px] items-center gap-2.5 rounded-b border-2 border-[#b5b5b5] bg-linear-to-b from-[#e0e0e0] to-[#d0d0d0] px-[7px] pt-1 text-[#777]">
                <button role="tab" aria-selected="false" type="button">開始</button>
                <button type="button" aria-label="開始 を閉じる"><X /></button>
              </div>
              <div className="flex h-[46px] items-center rounded-b border-2 border-t-0 border-[#b9b9b9] bg-linear-to-b from-[#f1f1f1] to-white pt-1 pr-2.5 pl-1">
                <DocIcon className="size-6" />
                <button role="tab" aria-selected="true" type="button" className="mr-5 ml-4 font-medium">名称未設定 : 1*</button>
                <button type="button" aria-label="名称未設定 を閉じる"><X /></button>
              </div>
            </div>
          </main>
        </div>

        <footer className="flex h-[45px] shrink-0 items-center justify-end gap-2 pt-1 pr-0.5">
          <Combo
            label="Notifications"
            value="2"
            className="h-[38px] w-[129px] pr-1 pl-0.5"
            selectClass="ml-2"
            icon={
              <svg viewBox="0 0 20 20" className="size-5" fill="#e6c630" stroke="#b3941c" aria-hidden="true">
                <path d="M.5 .5H19.500V19.500H.5Z" />
                <path d="M2 16L10 8L18 16M2 4L10 11L18 4" fill="none" stroke="#d4b227" />
              </svg>
            }
          />
          <Combo
            label="Navigation style"
            value="Touchpad"
            className="h-[38px] w-[157px] pr-1 pl-[15px]"
            selectClass="ml-1"
            icon={
              <svg viewBox="0 0 20 20" className="size-5" fill="none" stroke="#333" strokeWidth="2" aria-hidden="true">
                <rect x="1" y="1" width="18" height="18" rx="2.500" />
                <path d="M1 13H19M10 13V19" />
              </svg>
            }
          />
          <Combo label="Dimensions" value="155.79 mm x 99.00 mm" className="h-[38px] w-[236px] pr-1 pl-1.5" />
        </footer>
      </div>
    </div>
  );
}
